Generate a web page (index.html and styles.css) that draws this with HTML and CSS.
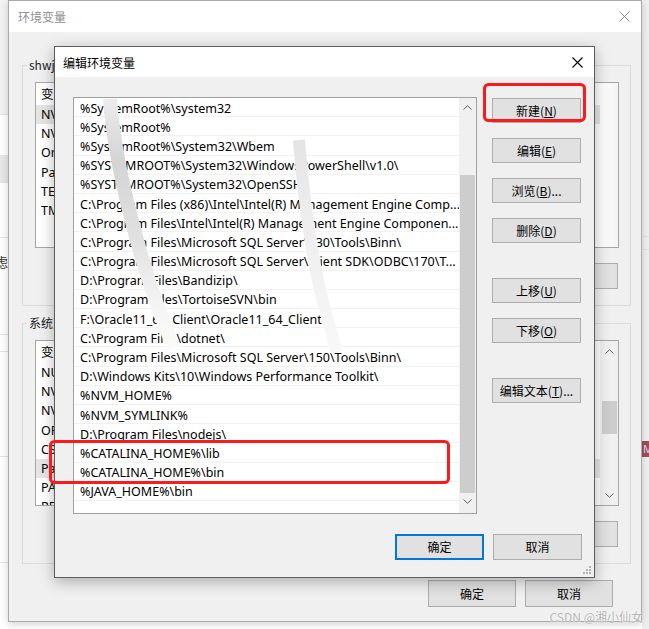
FILE: index.html
```html
<!DOCTYPE html>
<html lang="zh-CN">
<head>
<meta charset="utf-8">
<title>编辑环境变量</title>
<link rel="stylesheet" href="styles.css">
</head>
<body>
<div class="desk">
  <div class="strip strip-left">
    <div class="sl sl-a"></div>
    <div class="sl sl-b"></div>
    <div class="sl sl-c"></div>
    <div class="sl sl-d"><span>工具。</span></div>
    <div class="sl sl-e"><span>考虑</span></div>
    <div class="sl sl-f"></div>
    <div class="sl sl-g"></div>
    <div class="sl sl-h"></div>
    <div class="sl sl-i"></div>
  </div>
  <div class="strip strip-right">
    <div class="sr sr-a"></div>
    <div class="sr sr-b"></div>
    <div class="sr sr-c"></div>
    <div class="sr sr-d">M</div>
  </div>

  <section class="win win-bg">
    <header class="titlebar">
      <span class="title">环境变量</span>
      <svg class="close close-bg" width="11" height="11" viewBox="0 0 11 11"><path d="M0.5 0.5 L10.5 10.5 M10.5 0.5 L0.5 10.5" stroke="currentColor" stroke-width="1" fill="none"/></svg>
    </header>
    <div class="win-body">
      <fieldset class="group">
        <legend>shwj 的用户变量(U)</legend>
        <div class="vlist">
          <div class="vcol">
            <div class="vrow vhead"><span class="k">变量</span><span class="v">值</span></div>
            <div class="vrow sel"><span class="k">NVM_HOME</span><span class="v">D:\nvm</span></div>
            <div class="vrow"><span class="k">NVM_SYMLINK</span><span class="v">D:\nodejs</span></div>
            <div class="vrow"><span class="k">OneDrive</span><span class="v">C:\Users\shwj\OneDrive</span></div>
            <div class="vrow"><span class="k">Path</span><span class="v">C:\Users\shwj\AppData\Local\Microsoft\WindowsApps</span></div>
            <div class="vrow"><span class="k">TEMP</span><span class="v">C:\Users\shwj\AppData\Local\Temp</span></div>
            <div class="vrow"><span class="k">TMP</span><span class="v">C:\Users\shwj\AppData\Local\Temp</span></div>
          </div>
          <div class="vside"></div>
        </div>
        <div class="group-btns">
          <button class="btn">新建(<u>N</u>)...</button>
          <button class="btn">编辑(<u>E</u>)...</button>
          <button class="btn">删除(<u>D</u>)</button>
        </div>
      </fieldset>

      <fieldset class="group group-sys">
        <legend>系统变量(<u>S</u>)</legend>
        <div class="vlist">
          <div class="vcol">
            <div class="vrow vhead"><span class="k">变量</span><span class="v">值</span></div>
            <div class="vrow"><span class="k">NUMBER_OF_PROCESSORS</span><span class="v">8</span></div>
            <div class="vrow"><span class="k">NVM_HOME</span><span class="v">D:\nvm</span></div>
            <div class="vrow"><span class="k">NVM_SYMLINK</span><span class="v">D:\nodejs</span></div>
            <div class="vrow"><span class="k">ORACLE_HOME</span><span class="v">F:\Oracle11_64_Client</span></div>
            <div class="vrow"><span class="k">CS_HOME</span><span class="v">C:\</span></div>
            <div class="vrow sel"><span class="k">Path</span><span class="v">C:\Windows\system32</span></div>
            <div class="vrow"><span class="k">PATHEXT</span><span class="v">.COM;.EXE;.BAT</span></div>
            <div class="vrow"><span class="k">RE</span><span class="v"></span></div>
          </div>
          <div class="vside vscroll">
            <svg class="chev" width="9" height="5" viewBox="0 0 9 5"><path d="M0.5 4.5 L4.5 0.7 L8.5 4.5" stroke="#606060" fill="none"/></svg>
            <div class="vthumb"></div>
            <svg class="chev chev-down" width="9" height="5" viewBox="0 0 9 5"><path d="M0.5 0.5 L4.5 4.3 L8.5 0.5" stroke="#606060" fill="none"/></svg>
          </div>
        </div>
        <div class="group-btns">
          <button class="btn">新建(<u>W</u>)...</button>
          <button class="btn">编辑(<u>I</u>)...</button>
          <button class="btn">删除(<u>L</u>)</button>
        </div>
      </fieldset>

      <div class="win-foot">
        <button class="btn btn-foot">确定</button>
        <button class="btn btn-foot">取消</button>
      </div>
    </div>
  </section>

  <section class="win dlg">
    <header class="titlebar dlg-titlebar">
      <span class="title dlg-title">编辑环境变量</span>
      <svg class="close" width="11" height="11" viewBox="0 0 11 11"><path d="M0.5 0.5 L10.5 10.5 M10.5 0.5 L0.5 10.5" stroke="currentColor" stroke-width="1.1" fill="none"/></svg>
    </header>
    <div class="dlg-body">
      <div class="dlg-main">
        <div class="plist">
          <ul class="pitems">
            <li>%SystemRoot%\system32</li>
            <li>%SystemRoot%</li>
            <li>%SystemRoot%\System32\Wbem</li>
            <li>%SYSTEMROOT%\System32\WindowsPowerShell\v1.0\</li>
            <li>%SYSTEMROOT%\System32\OpenSSH\</li>
            <li>C:\Program Files (x86)\Intel\Intel(R) Management Engine Comp...</li>
            <li>C:\Program Files\Intel\Intel(R) Management Engine Componen...</li>
            <li>C:\Program Files\Microsoft SQL Server\130\Tools\Binn\</li>
            <li>C:\Program Files\Microsoft SQL Server\Client SDK\ODBC\170\T...</li>
            <li>D:\Program Files\Bandizip\</li>
            <li>D:\Program Files\TortoiseSVN\bin</li>
            <li>F:\Oracle11_64_Client\Oracle11_64_Client</li>
            <li>C:\Program Files\dotnet\</li>
            <li>C:\Program Files\Microsoft SQL Server\150\Tools\Binn\</li>
            <li>D:\Windows Kits\10\Windows Performance Toolkit\</li>
            <li>%NVM_HOME%</li>
            <li>%NVM_SYMLINK%</li>
            <li>D:\Program Files\nodejs\</li>
            <li>%CATALINA_HOME%\lib</li>
            <li>%CATALINA_HOME%\bin</li>
            <li>%JAVA_HOME%\bin</li>
            <li></li>
          </ul>
          <div class="pscroll">
            <svg class="chev" width="9" height="5" viewBox="0 0 9 5"><path d="M0.5 4.5 L4.5 0.7 L8.5 4.5" stroke="#606060" fill="none"/></svg>
            <div class="pthumb"></div>
            <svg class="chev chev-down" width="9" height="5" viewBox="0 0 9 5"><path d="M0.5 0.5 L4.5 4.3 L8.5 0.5" stroke="#606060" fill="none"/></svg>
          </div>
        </div>
        <div class="dlg-btns">
          <button class="btn">新建(<u>N</u>)</button>
          <button class="btn">编辑(<u>E</u>)</button>
          <button class="btn">浏览(<u>B</u>)...</button>
          <button class="btn">删除(<u>D</u>)</button>
          <button class="btn gap-top">上移(<u>U</u>)</button>
          <button class="btn">下移(<u>O</u>)</button>
          <button class="btn gap-top">编辑文本(<u>T</u>)...</button>
        </div>
      </div>
      <div class="dlg-foot">
        <button class="btn btn-foot btn-default">确定</button>
        <button class="btn btn-foot">取消</button>
      </div>
      <svg class="grip" width="8" height="8" viewBox="0 0 8 8" fill="#b4b4b4">
        <rect x="6" y="0" width="2" height="2"/>
        <rect x="3" y="3" width="2" height="2"/><rect x="6" y="3" width="2" height="2"/>
        <rect x="0" y="6" width="2" height="2"/><rect x="3" y="6" width="2" height="2"/><rect x="6" y="6" width="2" height="2"/>
      </svg>
    </div>
  </section>

  <svg class="marks" width="649" height="629" viewBox="0 0 649 629">
    <defs>
      <linearGradient id="smear1" gradientUnits="userSpaceOnUse" x1="0" y1="98" x2="0" y2="350">
        <stop offset="0" stop-color="#ececec"/>
        <stop offset="0.25" stop-color="#d4d4d4"/>
        <stop offset="0.55" stop-color="#e0e0e0"/>
        <stop offset="0.8" stop-color="#f3f3f3"/>
        <stop offset="1" stop-color="#fbfbfb"/>
      </linearGradient>
      <linearGradient id="smear2" gradientUnits="userSpaceOnUse" x1="0" y1="140" x2="0" y2="352">
        <stop offset="0" stop-color="#e4e4e4"/>
        <stop offset="0.4" stop-color="#eeeeee"/>
        <stop offset="1" stop-color="#f8f8f8"/>
      </linearGradient>
    </defs>
    <path d="M110 99 C113 140 123 190 137 240 C147 278 160 315 174 348" stroke="url(#smear1)" stroke-width="14" fill="none" stroke-linecap="butt"/>
    <path d="M299 140 C303 190 309 240 319 285 C325 312 331 332 337 352" stroke="url(#smear2)" stroke-width="12" fill="none" stroke-linecap="butt"/>
    <rect x="484.5" y="84.5" width="100" height="36" rx="4" fill="none" stroke="#fe1a1a" stroke-width="3"/>
    <rect x="50.5" y="441.5" width="398" height="41" rx="4" fill="none" stroke="#fe1a1a" stroke-width="3"/>
  </svg>

  <div class="watermark">CSDN @湘小仙女</div>
</div>
</body>
</html>
```

FILE: styles.css
```css
* { box-sizing: border-box; }
html, body { margin: 0; padding: 0; }
body {
  width: 649px;
  height: 629px;
  overflow: hidden;
  background: #ffffff;
  font-family: "Noto Sans", "Noto Sans CJK SC", sans-serif;
  font-size: 12px;
  color: #000;
}
u { text-decoration: underline; text-underline-offset: 1px; }

.desk { position: relative; width: 649px; height: 629px; overflow: hidden; }

/* desktop strips behind the windows */
.strip { position: absolute; top: 0; height: 629px; display: flex; flex-direction: column; overflow: hidden; }
.strip-left { left: 0; width: 8px; }
.sl { flex: none; border-bottom: 1px solid #e3e3e3; display: flex; justify-content: flex-end; align-items: center; white-space: nowrap; font-family: "Noto Sans CJK SC", sans-serif; font-size: 13px; color: #333; }
.sl-a { height: 115px; background: #f3f3f3; }
.sl-b { height: 40px; border-bottom: none; }
.sl-c { height: 28px; background: #e8e8e8; }
.sl-d { height: 55px; padding-top: 6px; }
.sl-e { height: 97px; align-items: flex-start; padding-top: 14px; }
.sl-f { height: 17px; }
.sl-g { height: 105px; }
.sl-h { height: 106px; }
.sl-i { flex: 1; border-bottom: none; }

.strip-right { right: 0; width: 7px; background: #f0f0f0; }
.sr { flex: none; }
.sr-a { height: 237px; border-bottom: 1px solid #e2e2e2; }
.sr-b { height: 13px; border-bottom: 1px solid #e2e2e2; }
.sr-c { height: 191px; }
.sr-d { height: 16px; background: #9c4f58; color: #e8d8f0; font-size: 11px; line-height: 16px; padding-left: 1px; }

/* windows */
.win { position: absolute; display: flex; flex-direction: column; background: #f0f0f0; }
.titlebar { flex: none; display: flex; align-items: center; justify-content: space-between; background: #fff; }
.title { white-space: nowrap; }
.close { display: block; }

.win-bg {
  left: 8px; top: 0; width: 634px; height: 622px;
  border: 1px solid #aaaaaa;
  box-shadow: 0 2px 8px rgba(0,0,0,0.18);
}
.win-bg .titlebar { height: 31px; padding: 0 11px 0 9px; }
.win-bg .title { color: #8f8f8f; font-family: "Noto Sans CJK SC", sans-serif; }
.close-bg { color: #8c8c8c; }

.win-body { flex: 1; padding: 25px 10px 0 13px; display: flex; flex-direction: column; }

.group {
  margin: 0;
  border: 1px solid #dcdcdc;
  padding: 9px 11px 16px 12px;
  min-width: 0;
}
.group legend {
  padding: 0 2px;
  margin-left: -8px;
  line-height: 16px;
  font-family: "Noto Sans CJK SC", sans-serif;
  color: #1a1a1a;
}
.group-sys { margin-top: 9px; }

.vlist {
  height: 166px;
  border: 1px solid #a6a6a6;
  background: #fff;
  display: flex;
  overflow: hidden;
}
.vcol { flex: 1; min-width: 0; }
.vside { width: 18px; flex: none; background: linear-gradient(to right, #fff, #f4f4f4); }
.vrow { height: 19.2px; line-height: 20px; display: flex; white-space: nowrap; font-size: 12.5px; }
.vrow .k { width: 200px; padding-left: 5px; flex: none; }
.vrow .v { flex: 1; }
.vhead { height: 22px; line-height: 22px; font-family: "Noto Sans CJK SC", sans-serif; }
.vrow.sel { background: #e5e5e5; }

.vscroll { background: #f0f0f0; display: flex; flex-direction: column; align-items: center; }
.vscroll .chev { margin-top: 8px; }
.vthumb { width: 15px; height: 33px; background: #cdcdcd; margin-top: 47px; }
.vscroll .chev-down { margin-top: auto; margin-bottom: 7px; }

.group-btns { display: flex; justify-content: flex-end; gap: 9px; margin-top: 15px; margin-right: 1px; }

.btn {
  width: 89px;
  height: 25px;
  padding: 0;
  background: #e1e1e1;
  border: 1px solid #adadad;
  border-radius: 0;
  font-family: "Noto Sans CJK SC", sans-serif;
  font-size: 12px;
  color: #000;
  line-height: 1;
  white-space: nowrap;
}
.group-btns .btn { height: 26px; }

.win-foot { display: flex; justify-content: flex-end; gap: 9px; margin-top: 16px; padding-right: 18px; }
.btn-foot { height: 27px; width: 88px; }

/* foreground dialog */
.dlg {
  left: 54px; top: 46px; width: 541px; height: 532px;
  border: 1px solid #5c5c5c;
  box-shadow: 0 4px 14px rgba(0,0,0,0.28);
}
.dlg-titlebar { height: 30px; padding: 0 11px 0 8px; }
.dlg-title { font-family: "Noto Sans CJK SC", sans-serif; color: #000; }
.dlg-titlebar .close { color: #000; }

.dlg-body { flex: 1; position: relative; padding: 20px 12px 0 18px; display: flex; flex-direction: column; }
.dlg-main { display: flex; gap: 15px; }

.plist {
  width: 404px;
  height: 417px;
  border: 1px solid #a0a0a0;
  background: #fff;
  display: flex;
  overflow: hidden;
}
.pitems { list-style: none; margin: 0; padding: 0; flex: 1; min-width: 0; }
.pitems li {
  height: 19.2px;
  line-height: 18.2px;
  padding: 1.6px 0 0 6px;
  border-bottom: 1px solid #f2f2f2;
  white-space: nowrap;
  overflow: hidden;
  font-size: 12.5px;
}
.pscroll { width: 17px; flex: none; background: #f0f0f0; display: flex; flex-direction: column; align-items: center; }
.pscroll .chev { margin-top: 7px; }
.pthumb { width: 15px; height: 318px; background: #cdcdcd; margin-top: 65px; }
.pscroll .chev-down { margin-top: 6px; }

.dlg-btns { display: flex; flex-direction: column; gap: 15px; padding-top: 1px; }
.dlg-btns .gap-top { margin-top: 20px; }

.dlg-foot { display: flex; justify-content: flex-end; gap: 9px; margin-top: 20px; }
.dlg-foot .btn-foot { width: 89px; height: 26px; }
.btn-default { border-color: #0078d7; box-shadow: inset 0 0 0 1px #0078d7; }

.grip { position: absolute; right: 3px; bottom: 3px; }

/* overlays */
.marks { position: absolute; left: 0; top: 0; pointer-events: none; }
.watermark {
  position: absolute;
  right: 6px;
  bottom: 4px;
  font-family: "Noto Sans CJK SC", sans-serif;
  font-size: 12px;
  color: #b4b4b4;
  text-shadow: 0 0 1px #fff, 0 0 1px #fff;
  white-space: nowrap;
}
```
